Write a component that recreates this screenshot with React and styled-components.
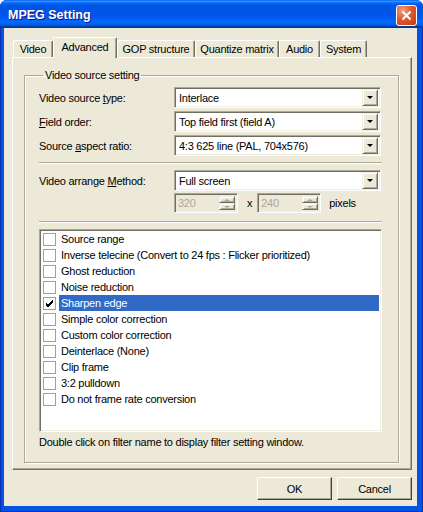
import React from 'react';
import styled, { createGlobalStyle } from 'styled-components';

const GlobalStyle = createGlobalStyle`
  html, body { margin: 0; padding: 0; background: #fff; }
  body {
    font-family: "Liberation Sans", Arial, sans-serif;
    font-size: 11px;
    letter-spacing: -0.25px;
    color: #000;
  }
`;

const tabs = [
  { name: 'Video', w: 40 },
  { name: 'Advanced', w: 64, active: true },
  { name: 'GOP structure', w: 78 },
  { name: 'Quantize matrix', w: 84 },
  { name: 'Audio', w: 41 },
  { name: 'System', w: 47 },
];

const filters = [
  'Source range',
  'Inverse telecine (Convert to 24 fps : Flicker prioritized)',
  'Ghost reduction',
  'Noise reduction',
  'Sharpen edge',
  'Simple color correction',
  'Custom color correction',
  'Deinterlace (None)',
  'Clip frame',
  '3:2 pulldown',
  'Do not frame rate conversion',
];

const Window = styled.div`
  width: 423px;
  height: 512px;
  display: flex;
  flex-direction: column;
  background: #0553e2;
  border-radius: 7px 7px 0 0;
  overflow: hidden;
  box-shadow: inset 1px 0 #0a2fb5, inset -1px 0 #0a2fb5, inset 0 -1px #0a2fb5;
`;

const TitleBar = styled.div`
  height: 28px;
  flex: none;
  display: flex;
  align-items: center;
  justify-content: space-between;
  padding: 0 6px 0 8px;
  background: linear-gradient(to bottom, #0058ee 0%, #3593ff 4%, #288eff 6%, #127dff 8%, #036ffc 10%,
    #0262ee 14%, #0057e5 20%, #0054e3 24%, #0055eb 56%, #005bf5 66%, #026afe 76%, #0062ef 86%,
    #0052d6 92%, #0040ab 94%, #003092 100%);
`;

const Title = styled.span`
  color: #fff;
  font: bold 12.5px "Liberation Sans", Arial, sans-serif;
  letter-spacing: 0;
  text-shadow: 1px 1px 0 #0f1089;
  padding-top: 1px;
`;

const CloseButton = styled.div`
  width: 21px;
  height: 21px;
  box-sizing: border-box;
  align-self: flex-start;
  margin-top: 5px;
  border: 1px solid #fff;
  border-radius: 3px;
  background: radial-gradient(circle at 30% 25%, #f2a085 0%, #e2582f 45%, #c23a0a 100%);
  display: flex;
  align-items: center;
  justify-content: center;
`;

const Client = styled.div`
  flex: 1;
  margin: 0 6px 6px 4px;
  background: #ece9d8;
  padding: 9px 5px 0 8px;
  display: flex;
  flex-direction: column;
`;

const TabStrip = styled.div`
  display: flex;
  align-items: flex-end;
  height: 20px;
  padding-left: 1px;
`;

const Tab = styled.div`
  width: ${p => p.$w}px;
  height: ${p => (p.$active ? 21 : 17)}px;
  margin-bottom: ${p => (p.$active ? -1 : 0)}px;
  box-sizing: border-box;
  position: relative;
  z-index: ${p => (p.$active ? 1 : 0)};
  display: flex;
  align-items: center;
  justify-content: center;
  padding-bottom: ${p => (p.$active ? 2 : 0)}px;
  background: #ece9d8;
  border-top: 1px solid #fff;
  border-left: 1px solid #fff;
  border-right: 1px solid #716f64;
  border-radius: 2px 2px 0 0;
  box-shadow: inset -1px 0 #aca899;
  white-space: nowrap;
`;

const Panel = styled.div`
  width: 400px;
  height: 413px;
  box-sizing: border-box;
  border: 1px solid;
  border-color: #fff #716f64 #716f64 #fff;
  box-shadow: inset -1px -1px #aca899;
  padding: 11px 12px 0 11px;
`;

const GroupBox = styled.fieldset`
  margin: 0;
  padding: 0 16px 13px 14px;
  border: 1px solid #aca899;
  box-shadow: inset 1px 1px #fff, 1px 1px #fff;
  min-width: 0;
`;

const Legend = styled.legend`
  padding: 0 2px;
  margin-left: 4px;
  line-height: 13px;
`;

const FormRow = styled.div`
  display: flex;
  align-items: center;
  height: ${p => p.$h || 21}px;
  margin-top: ${p => p.$mt || 0}px;
`;

const Label = styled.div`
  width: 135px;
  flex: none;
`;

const Accel = styled.span`
  text-decoration: underline;
`;

const Combo = styled.div`
  width: 207px;
  height: 21px;
  box-sizing: border-box;
  border: 1px solid;
  border-color: #aca899 #fff #fff #aca899;
  box-shadow: inset 1px 1px #716f64, inset -1px -1px #f1efe2;
  background: #fff;
  padding: 2px 2px 2px 4px;
  display: flex;
  align-items: center;
`;

const ComboText = styled.span`
  flex: 1;
  white-space: nowrap;
  overflow: hidden;
`;

const RaisedButton = styled.div`
  box-sizing: border-box;
  background: #ece9d8;
  border: 1px solid;
  border-color: #f1efe2 #716f64 #716f64 #f1efe2;
  box-shadow: inset 1px 1px #fff, inset -1px -1px #aca899;
  display: flex;
  align-items: center;
  justify-content: center;
`;

const DropButton = styled(RaisedButton)`
  width: 16px;
  height: 17px;
  flex: none;
`;

const Arrow = styled.div`
  width: 0;
  height: 0;
  border-left: ${p => p.$size}px solid transparent;
  border-right: ${p => p.$size}px solid transparent;
  ${p => (p.$up ? 'border-bottom' : 'border-top')}: ${p => p.$size - 0.5}px solid ${p => p.$color};
`;

const Separator = styled.div`
  height: 0;
  border-top: 1px solid #aca899;
  border-bottom: 1px solid #fff;
  margin-top: ${p => p.$mt}px;
`;

const Spinner = styled.div`
  width: 64px;
  height: 20px;
  box-sizing: border-box;
  border: 1px solid;
  border-color: #aca899 #fff #fff #aca899;
  box-shadow: inset 1px 1px #716f64, inset -1px -1px #f1efe2;
  background: #ece9d8;
  padding: 2px;
  display: flex;
`;

const SpinText = styled.span`
  flex: 1;
  color: #aca899;
  padding: 1px 0 0 1px;
`;

const SpinButtons = styled.div`
  width: 16px;
  display: flex;
  flex-direction: column;
`;

const SpinButton = styled(RaisedButton)`
  flex: 1;
`;

const Times = styled.span`
  margin: 0 5px 0 9px;
`;

const Unit = styled.span`
  margin-left: 8px;
`;

const ListBox = styled.div`
  margin-top: 6px;
  height: 203px;
  box-sizing: border-box;
  border: 1px solid;
  border-color: #aca899 #fff #fff #aca899;
  box-shadow: inset 1px 1px #716f64, inset -1px -1px #f1efe2;
  background: #fff;
  padding: 1px 2px 0 2px;
`;

const ListItem = styled.div`
  height: 16px;
  display: flex;
  align-items: center;
`;

const CheckBox = styled.div`
  width: 13px;
  height: 13px;
  box-sizing: border-box;
  margin: 0 3px 0 1px;
  border: 1px solid #a0a0a0;
  background: #fff;
  flex: none;
  display: flex;
  align-items: center;
  justify-content: center;
`;

const ItemText = styled.div`
  flex: 1;
  height: 16px;
  line-height: 16px;
  padding-left: 2px;
  white-space: nowrap;
  background: ${p => (p.$selected ? '#316ac5' : 'transparent')};
  color: ${p => (p.$selected ? '#fff' : '#000')};
`;

const Hint = styled.div`
  margin-top: 4px;
  line-height: 13px;
`;

const ButtonRow = styled.div`
  display: flex;
  justify-content: flex-end;
  gap: 5px;
  margin-top: 7px;
  width: 400px;
`;

const DialogButton = styled(RaisedButton)`
  width: 75px;
  height: 23px;
  border-color: #fff #404040 #404040 #fff;
  box-shadow: inset -1px -1px #aca899;
`;

function ComboBox({ value }) {
  return (
    <Combo>
      <ComboText>{value}</ComboText>
      <DropButton>
        <Arrow $size={3.5} $color="#000" />
      </DropButton>
    </Combo>
  );
}

function SpinBox({ value }) {
  return (
    <Spinner>
      <SpinText>{value}</SpinText>
      <SpinButtons>
        <SpinButton><Arrow $up $size={3} $color="#aca899" /></SpinButton>
        <SpinButton><Arrow $size={3} $color="#aca899" /></SpinButton>
      </SpinButtons>
    </Spinner>
  );
}

export default function App() {
  return (
    <>
      <GlobalStyle />
      <Window>
        <TitleBar>
          <Title>MPEG Setting</Title>
          <CloseButton>
            <svg width="11" height="11" viewBox="0 0 11 11">
              <path d="M1.5 1.5 L9.5 9.5 M9.5 1.5 L1.5 9.5" stroke="#fff" strokeWidth="2" />
            </svg>
          </CloseButton>
        </TitleBar>
        <Client>
          <TabStrip>
            {tabs.map(t => (
              <Tab key={t.name} $w={t.w} $active={t.active}>{t.name}</Tab>
            ))}
          </TabStrip>
          <Panel>
            <GroupBox>
              <Legend>Video source setting</Legend>
              <FormRow $mt={5}>
                <Label>Video source <Accel>t</Accel>ype:</Label>
                <ComboBox value="Interlace" />
              </FormRow>
              <FormRow $mt={3}>
                <Label><Accel>F</Accel>ield order:</Label>
                <ComboBox value="Top field first (field A)" />
              </FormRow>
              <FormRow $mt={3}>
                <Label>Source <Accel>a</Accel>spect ratio:</Label>
                <ComboBox value="4:3 625 line (PAL, 704x576)" />
              </FormRow>
              <Separator $mt={6} />
              <FormRow $mt={6}>
                <Label>Video arrange <Accel>M</Accel>ethod:</Label>
                <ComboBox value="Full screen" />
              </FormRow>
              <FormRow $mt={2} $h={20}>
                <Label />
                <SpinBox value="320" />
                <Times>x</Times>
                <SpinBox value="240" />
                <Unit>pixels</Unit>
              </FormRow>
              <Separator $mt={8} />
              <ListBox>
                {filters.map(f => {
                  const on = f === 'Sharpen edge';
                  return (
                    <ListItem key={f}>
                      <CheckBox>
                        {on && (
                          <svg width="9" height="9" viewBox="0 0 9 9">
                            <path d="M1 4 L3 6 L8 1 M1 5 L3 7 L8 2 M1 6 L3 8 L8 3" stroke="#000" strokeWidth="1" fill="none" />
                          </svg>
                        )}
                      </CheckBox>
                      <ItemText $selected={on}>{f}</ItemText>
                    </ListItem>
                  );
                })}
              </ListBox>
              <Hint>Double click on filter name to display filter setting window.</Hint>
            </GroupBox>
          </Panel>
          <ButtonRow>
            <DialogButton>OK</DialogButton>
            <DialogButton>Cancel</DialogButton>
          </ButtonRow>
        </Client>
      </Window>
    </>
  );
}
